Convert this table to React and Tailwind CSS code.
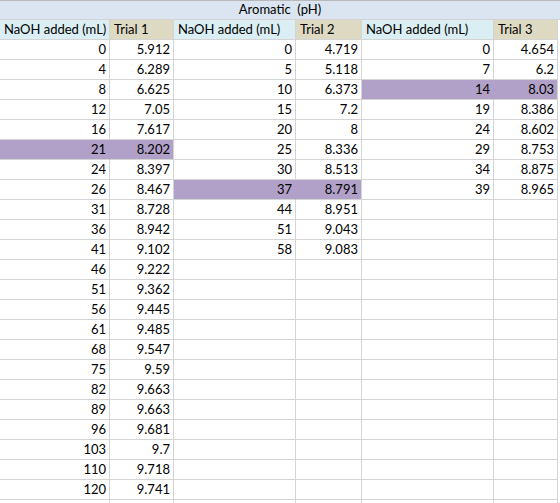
import React from "react";

const t1 = [
  [0, "5.912"], [4, "6.289"], [8, "6.625"], [12, "7.05"], [16, "7.617"], [21, "8.202"],
  [24, "8.397"], [26, "8.467"], [31, "8.728"], [36, "8.942"], [41, "9.102"], [46, "9.222"],
  [51, "9.362"], [56, "9.445"], [61, "9.485"], [68, "9.547"], [75, "9.59"], [82, "9.663"],
  [89, "9.663"], [96, "9.681"], [103, "9.7"], [110, "9.718"], [120, "9.741"],
];
const t2 = [
  [0, "4.719"], [5, "5.118"], [10, "6.373"], [15, "7.2"], [20, "8"], [25, "8.336"],
  [30, "8.513"], [37, "8.791"], [44, "8.951"], [51, "9.043"], [58, "9.083"],
];
const t3 = [
  [0, "4.654"], [7, "6.2"], [14, "8.03"], [19, "8.386"], [24, "8.602"], [29, "8.753"],
  [34, "8.875"], [39, "8.965"],
];
const hl = [5, 7, 2];

function Pair({ data, i, idx }) {
  const row = data[i];
  const on = hl[idx] === i;
  const bg = on ? "bg-[#b1a0c7]" : "bg-white";
  return (
    <>
      <div
        className={`h-5 border-b border-r ${on ? "border-r-[#b1a0c7]" : "border-r-[#d4d4d4]"} border-b-[#d4d4d4] ${bg} pr-[3px] text-right leading-[19px]`}
      >
        {row ? row[0] : ""}
      </div>
      <div
        className={`h-5 border-b border-r border-[#d4d4d4] ${bg} pr-[3px] text-right leading-[19px]`}
      >
        {row ? row[1] : ""}
      </div>
    </>
  );
}

export default function App() {
  const rows = Array.from({ length: 24 }, (_, i) => i);
  const sets = [t1, t2, t3];
  return (
    <div
      className="w-[560px] h-[503px] overflow-hidden bg-white text-[13px] text-black"
      style={{ fontFamily: "Lato, 'Liberation Sans', sans-serif" }}
    >
      <div className="h-5 border-t border-t-[#b8b8b8] border-b border-b-[#d4d4d4] bg-[#dbe5f1] text-center leading-[17px]">
        Aromatic&nbsp;&nbsp;(pH)
      </div>
      <div className="grid grid-cols-[110px_64px_122px_66px_132px_64px]">
        {[1, 2, 3].map((n) => (
          <React.Fragment key={n}>
            <div className="h-5 border-b border-r border-[#d4d4d4] bg-[#daeef3] pl-[4px] leading-[19px] whitespace-nowrap">
              NaOH added (mL)
            </div>
            <div className="h-5 border-b border-r border-[#d4d4d4] bg-[#ddd9c3] pl-[4px] leading-[19px] whitespace-nowrap">
              Trial {n}
            </div>
          </React.Fragment>
        ))}
        {rows.map((i) => (
          <React.Fragment key={i}>
            {sets.map((d, k) => (
              <Pair key={k} data={d} i={i} idx={k} />
            ))}
          </React.Fragment>
        ))}
      </div>
    </div>
  );
}
